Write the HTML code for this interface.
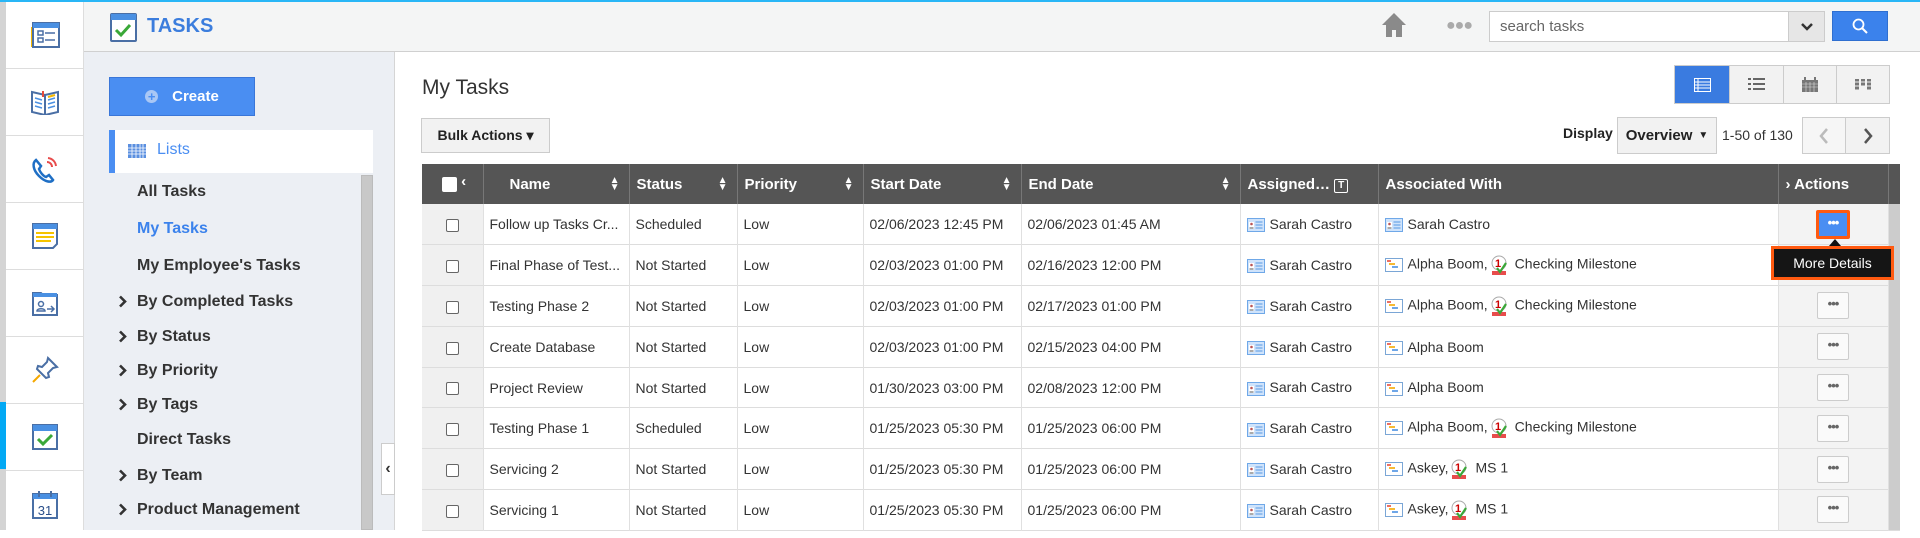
<!DOCTYPE html>
<html><head><meta charset="utf-8">
<style>
*{box-sizing:border-box;margin:0;padding:0}
body{width:1920px;height:530px;overflow:hidden;background:#fff;font-family:"Liberation Sans",Arial,sans-serif;position:relative;color:#333}
.abs{position:absolute}
#topline{left:0;top:0;width:1920px;height:2px;background:#29b6f6}
#iconbar{left:0;top:2px;width:84px;height:528px;background:#fff;border-right:1px solid #ddd}
#iconbar .g{position:absolute;left:0;top:0;width:6px;height:528px;background:#d4d4d4}
.ib{position:absolute;left:6px;width:78px;height:67px;border-bottom:1px solid #ddd;display:flex;align-items:center;justify-content:center}
#header{left:84px;top:2px;width:1836px;height:50px;background:#f4f5f5;border-bottom:1px solid #d0d0d0}
#sidebar{left:84px;top:52px;width:311px;height:478px;background:#eceff4;border-right:1px solid #d5d5d5}
.side-item{position:absolute;left:53px;font-size:16px;font-weight:bold;color:#333}
.chev{position:absolute;left:34px;width:9px;height:13px}
th,td{font-size:14px}
table{border-collapse:collapse;position:absolute;left:422px;top:164px;width:1478px;table-layout:fixed}
thead tr{height:40px;background:#555}
thead th{color:#fff;font-weight:bold;font-size:15px;text-align:left;padding-left:7px;border-right:1px solid #777;position:relative;white-space:nowrap}
tbody tr{height:40.8px;border-bottom:1px solid #ddd}
tbody td{padding-left:6px;white-space:nowrap;overflow:hidden;border-right:1px solid #e0e0e0;color:#333}
td.cb{background:#f0f0f0;text-align:center;padding:0}
td.act{background:#f3f3f3;text-align:center;padding:0}
.box{display:inline-block;width:13px;height:13px;border:1px solid #666;border-radius:2px;background:#fff;vertical-align:middle}
.sort{position:absolute;right:9px;top:13px;font-size:10px;line-height:7px;color:#fff}
.dots{display:inline-block;width:32px;height:27px;border:1px solid #ccc;background:#fafafa;border-radius:2px;color:#666;font-size:13px;line-height:22px;font-weight:bold;letter-spacing:-1px}
.btn{position:absolute;border:1px solid #ccc;background:#f2f2f2;font-weight:bold;font-size:14px;display:flex;align-items:center;justify-content:center;color:#222}
.ic{display:inline-block;vertical-align:middle;margin-right:5px}
</style></head><body>
<svg width="0" height="0" style="position:absolute"><defs>
<symbol id="card" viewBox="0 0 18 14"><rect x=".5" y=".5" width="17" height="13" fill="#cfe3fb" stroke="#6fa8e8"/><rect x="2" y="4" width="5" height="7" fill="#fff"/><circle cx="4.5" cy="6" r="1.3" fill="#b55"/><path d="M2.5 10h4" stroke="#555"/><path d="M8.5 4h7M8.5 7h7M8.5 10h7" stroke="#6fa8e8" stroke-width="1.3"/></symbol>
<symbol id="proj" viewBox="0 0 18 14"><rect x=".5" y=".5" width="17" height="13" fill="#fff" stroke="#7aa6d6"/><path d="M2 3h4" stroke="#e74c3c" stroke-width="1.6"/><path d="M4 6h6" stroke="#f5a800" stroke-width="1.6"/><path d="M7 9h6" stroke="#4a90e2" stroke-width="1.6"/></symbol>
<symbol id="ms" viewBox="0 0 16 20"><rect x="1" y="16" width="14" height="4" fill="#e84c4c"/><circle cx="8" cy="8" r="7" fill="#fff" stroke="#aaa"/><text x="7" y="12" font-size="11" font-weight="bold" fill="#c00" text-anchor="middle" font-family="Liberation Sans">1</text><path d="M6 13l3 4 6-9" fill="none" stroke="#3aa838" stroke-width="2.2"/></symbol>
<symbol id="chv" viewBox="0 0 9 13"><path d="M2 1.5l5 5-5 5" fill="none" stroke="#333" stroke-width="2.6"/></symbol>
</defs></svg>
<div class="abs" id="topline"></div>
<div class="abs" id="iconbar"><div class="g"></div>
<div class="ib" style="top:0"><svg width="30" height="28" viewBox="0 0 30 28"><rect x="1" y="6" width="4" height="20" fill="#f5b800"/><rect x="3" y="2" width="26" height="24" fill="#fff" stroke="#4a6fa5" stroke-width="2"/><rect x="3" y="2" width="26" height="5" fill="#4a90e2"/><rect x="8" y="10" width="5" height="4" fill="none" stroke="#4a6fa5" stroke-width="1.5"/><rect x="8" y="17" width="5" height="4" fill="none" stroke="#4a6fa5" stroke-width="1.5"/><path d="M15 12h10M15 19h10" stroke="#4a6fa5" stroke-width="1.5"/></svg></div>
<div class="ib" style="top:67px"><svg width="30" height="26" viewBox="0 0 30 26"><path d="M2 3l13 3 13-3v20l-13 3-13-3z" fill="#fff" stroke="#4a6fa5" stroke-width="2"/><path d="M15 6v20" stroke="#4a6fa5" stroke-width="2"/><path d="M5 9l7 2M5 13l7 2M5 17l7 2M18 11l7-2M18 15l7-2M18 19l7-2" stroke="#4a90e2" stroke-width="1.5"/><path d="M18 8l7-2" stroke="#f5b800" stroke-width="2"/><path d="M13 2v6" stroke="#e74c3c" stroke-width="2"/></svg></div>
<div class="ib" style="top:134px"><svg width="30" height="30" viewBox="0 0 30 30"><path d="M6 6c-4 3-3 10 3 16s12 7 14 4l-4-5-3 2c-3-1-6-5-7-8l2-3z" fill="#fff" stroke="#1f6fc5" stroke-width="2.5"/><path d="M18 4a9 9 0 0 1 8 8M17 8a5 5 0 0 1 5 5" fill="none" stroke="#e84c4c" stroke-width="2"/></svg></div>
<div class="ib" style="top:201px"><svg width="28" height="28" viewBox="0 0 28 28"><path d="M2 2h24v20l-4 4H2z" fill="#fff" stroke="#4a6fa5" stroke-width="2"/><rect x="2" y="2" width="24" height="5" fill="#4a90e2"/><path d="M5 11h18M5 15h18M5 19h15" stroke="#f5c400" stroke-width="2"/></svg></div>
<div class="ib" style="top:268px"><svg width="28" height="28" viewBox="0 0 28 28"><path d="M2 4h8l2 2h14v20H2z" fill="#fff" stroke="#4a6fa5" stroke-width="2"/><rect x="2" y="4" width="24" height="4" fill="#4a90e2"/><circle cx="10" cy="15" r="2.5" fill="none" stroke="#4a6fa5" stroke-width="1.5"/><path d="M6 22c0-3 8-3 8 0z" fill="none" stroke="#4a6fa5" stroke-width="1.5"/><path d="M16 20h7M20 17l3 3-3 3" fill="none" stroke="#4a6fa5" stroke-width="1.5"/></svg></div>
<div class="ib" style="top:335px"><svg width="28" height="28" viewBox="0 0 28 28"><path d="M17 2l9 9-4 1-5 5 1 4-3 1-9-9 1-3 4 1 5-5z" fill="#fff" stroke="#4a6fa5" stroke-width="2"/><path d="M9 19l-7 7" stroke="#f5a800" stroke-width="2"/></svg></div>
<div class="ib" style="top:402px"><svg width="28" height="28" viewBox="0 0 28 28"><rect x="2" y="2" width="24" height="24" fill="#fff" stroke="#4a6fa5" stroke-width="2"/><rect x="2" y="2" width="24" height="6" fill="#4a90e2"/><path d="M7 16l5 5 9-9" fill="none" stroke="#3aa838" stroke-width="3"/></svg></div>
<div class="abs" style="left:0;top:400px;width:6px;height:67px;background:#03a9f4"></div>
<div class="ib" style="top:469px;border:none"><svg width="28" height="30" viewBox="0 0 28 30"><rect x="2" y="4" width="24" height="24" fill="#fff" stroke="#4a6fa5" stroke-width="2"/><rect x="2" y="4" width="24" height="5" fill="#4a90e2"/><path d="M8 1v6M20 1v6" stroke="#4a6fa5" stroke-width="2"/><text x="14" y="25" font-size="13" text-anchor="middle" fill="#2a4f8a" font-family="Liberation Sans">31</text></svg></div>
</div>

<div class="abs" id="header">
<svg class="abs" style="left:26px;top:11px" width="27" height="29" viewBox="0 0 27 29"><rect x="1" y="1" width="25" height="27" rx="1" fill="#fff" stroke="#4a6fa5" stroke-width="2"/><rect x="1" y="1" width="25" height="6" fill="#4a90e2"/><path d="M6 17l5 5 9-10" fill="none" stroke="#3aa838" stroke-width="3"/></svg>
<div class="abs" style="left:63px;top:13px;font-size:20px;font-weight:bold;color:#3b7ddd">TASKS</div>
<svg class="abs" style="left:1298px;top:10px" width="24" height="26" viewBox="0 0 24 26"><path d="M12 1L0 13h4v12h6v-7h4v7h6V13h4z" fill="#8a8a8a"/></svg>
<div class="abs" style="left:1362px;top:15px;font-size:16px;color:#aaa;letter-spacing:-1px">●●●</div>
<div class="abs" style="left:1405px;top:9px;width:304px;height:31px;background:#fff;border:1px solid #ccc;font-size:15px;color:#666;padding:6px 10px">search tasks</div>
<div class="abs" style="left:1704px;top:9px;width:37px;height:31px;background:#e6e6e6;border:1px solid #ccc;display:flex;align-items:center;justify-content:center"><svg width="14" height="10"><path d="M2 2l5 5 5-5" fill="none" stroke="#333" stroke-width="2.5"/></svg></div>
<div class="abs" style="left:1748px;top:9px;width:56px;height:30px;background:#3b82ec;border:1px solid #2f6fd0;display:flex;align-items:center;justify-content:center"><svg width="16" height="16"><circle cx="6.5" cy="6.5" r="5" fill="none" stroke="#fff" stroke-width="1.8"/><path d="M10 10l5 5" stroke="#fff" stroke-width="2"/></svg></div>
</div>

<div class="abs" id="sidebar">
<div class="abs" style="left:25px;top:25px;width:146px;height:39px;background:#4a8ef2;border:1px solid #3a76d8;color:#fff;font-weight:bold;font-size:15px;display:flex;align-items:center;justify-content:center"><span style="display:inline-block;width:13px;height:13px;border-radius:50%;background:#a9c7f5;color:#4a8ef2;font-size:13px;line-height:13px;text-align:center;margin-right:14px">+</span>Create</div>
<div class="abs" style="left:25px;top:78px;width:264px;height:43px;background:#fff;border-left:6px solid #4a8ef2"></div>
<svg class="abs" style="left:44px;top:92px" width="18" height="14"><rect width="18" height="14" fill="#5a8fe0"/><path d="M0 4h18M0 7h18M0 10h18M4 0v14M8 0v14M12 0v14M15 0v14" stroke="#fff" stroke-width=".8"/></svg>
<div class="abs" style="left:73px;top:89px;font-size:16px;color:#4a8ef2">Lists</div>
<div class="abs" style="left:277px;top:123px;width:12px;height:355px;background:#c8c8c8;border:1px solid #bbb"></div>
<div class="side-item" style="top:131px">All Tasks</div>
<div class="side-item" style="top:168px;color:#3b82ec">My Tasks</div>
<div class="side-item" style="top:205px">My Employee's Tasks</div>
<svg class="chev" style="top:243px"><use href="#chv"/></svg><div class="side-item" style="top:241px">By Completed Tasks</div>
<svg class="chev" style="top:278px"><use href="#chv"/></svg><div class="side-item" style="top:276px">By Status</div>
<svg class="chev" style="top:312px"><use href="#chv"/></svg><div class="side-item" style="top:310px">By Priority</div>
<svg class="chev" style="top:346px"><use href="#chv"/></svg><div class="side-item" style="top:344px">By Tags</div>
<div class="side-item" style="top:379px">Direct Tasks</div>
<svg class="chev" style="top:417px"><use href="#chv"/></svg><div class="side-item" style="top:415px">By Team</div>
<svg class="chev" style="top:451px"><use href="#chv"/></svg><div class="side-item" style="top:449px">Product Management</div>
<div class="abs" style="left:297px;top:391px;width:14px;height:52px;background:#fff;border:1px solid #ccc;font-weight:bold;font-size:16px;display:flex;align-items:center;justify-content:center">‹</div>
</div>

<div class="abs" style="left:422px;top:76px;font-size:21px;color:#333">My Tasks</div>
<div class="btn" style="left:421px;top:118px;width:129px;height:35px;font-size:14px">Bulk Actions ▾</div>

<div class="abs" style="left:1674px;top:65px;width:216px;height:39px;border:1px solid #ccc;background:#f2f2f2;display:flex">
<div style="width:55px;background:#3a7be0;border-right:1px solid #ccc;display:flex;align-items:center;justify-content:center"><svg width="17" height="14"><rect x=".5" y=".5" width="16" height="13" fill="none" stroke="#fff"/><path d="M0 4h17M0 7h17M0 10h17M4 0v14" stroke="#fff"/></svg></div>
<div style="width:54px;border-right:1px solid #ccc;display:flex;align-items:center;justify-content:center"><svg width="17" height="13"><path d="M0 1h3M5 1h12M0 6h3M5 6h12M0 11h3M5 11h12" stroke="#666" stroke-width="2"/></svg></div>
<div style="width:53px;border-right:1px solid #ccc;display:flex;align-items:center;justify-content:center"><svg width="16" height="15"><rect y="3" width="16" height="12" fill="#777"/><path d="M3 0v4M13 0v4" stroke="#777" stroke-width="2"/><path d="M0 7h16M0 10h16M4 5v10M8 5v10M12 5v10" stroke="#ddd" stroke-width=".6"/></svg></div>
<div style="flex:1;display:flex;align-items:center;justify-content:center"><svg width="16" height="12"><path d="M0 1h4M6 1h4M12 1h4M0 5h4M6 5h4M12 5h4M0 9h4M12 9h4" stroke="#777" stroke-width="3"/></svg></div>
</div>

<div class="abs" style="left:1563px;top:125px;font-size:14px;font-weight:bold;color:#222">Display</div>
<div class="btn" style="left:1617px;top:117px;width:100px;height:37px;font-size:15px">Overview <span style="font-size:10px;margin-left:6px">▼</span></div>
<div class="abs" style="left:1722px;top:127px;font-size:14px;color:#333">1-50 of 130</div>
<div class="abs" style="left:1802px;top:117px;width:88px;height:37px;border:1px solid #ccc;display:flex">
<div style="width:43px;background:#f6f6f6;border-right:1px solid #ccc;display:flex;align-items:center;justify-content:center"><svg width="10" height="16"><path d="M8 1L2 8l6 7" fill="none" stroke="#bbb" stroke-width="2.5"/></svg></div>
<div style="flex:1;background:#f2f2f2;display:flex;align-items:center;justify-content:center"><svg width="10" height="16"><path d="M2 1l6 7-6 7" fill="none" stroke="#555" stroke-width="2.5"/></svg></div>
</div>

<table>
<colgroup><col style="width:61px"><col style="width:146px"><col style="width:108px"><col style="width:126px"><col style="width:158px"><col style="width:219px"><col style="width:138px"><col style="width:400px"><col style="width:110px"><col style="width:12px"></colgroup>
<thead><tr>
<th style="padding-left:20px"><span class="box" style="border:none;width:15px;height:15px"></span> <span style="position:relative;top:-3px">‹</span></th>
<th style="padding-left:26px">Name<span class="sort">▲<br>▼</span></th>
<th>Status<span class="sort">▲<br>▼</span></th>
<th>Priority<span class="sort">▲<br>▼</span></th>
<th>Start Date<span class="sort">▲<br>▼</span></th>
<th>End Date<span class="sort">▲<br>▼</span></th>
<th>Assigned… <span style="display:inline-block;width:14px;height:14px;border:1.5px solid #fff;border-radius:2px;font-size:10px;line-height:11px;text-align:center;vertical-align:1px">T</span></th>
<th>Associated With</th>
<th>› Actions</th>
<th style="border:none"></th>
</tr></thead>
<tbody>
<tr><td class="cb"><span class="box"></span></td><td>Follow up Tasks Cr...</td><td>Scheduled</td><td>Low</td><td>02/06/2023 12:45 PM</td><td>02/06/2023 01:45 AM</td><td><svg class="ic" width="18" height="14"><use href="#card"/></svg>Sarah Castro</td><td><svg class="ic" width="18" height="14"><use href="#card"/></svg>Sarah Castro</td><td class="act"><span class="dots" style="background:#4a8ef2;border:3px solid #ff5a10;color:#fff;width:34px;height:29px;line-height:20px">•••</span></td><td rowspan="8" style="background:#ccc;padding:0;border:none"></td></tr>
<tr><td class="cb"><span class="box"></span></td><td>Final Phase of Test...</td><td>Not Started</td><td>Low</td><td>02/03/2023 01:00 PM</td><td>02/16/2023 12:00 PM</td><td><svg class="ic" width="18" height="14"><use href="#card"/></svg>Sarah Castro</td><td><svg class="ic" width="18" height="14"><use href="#proj"/></svg>Alpha Boom,<svg class="ic" style="margin:0 8px 0 3px" width="16" height="20"><use href="#ms"/></svg>Checking Milestone</td><td class="act"></td></tr>
<tr><td class="cb"><span class="box"></span></td><td>Testing Phase 2</td><td>Not Started</td><td>Low</td><td>02/03/2023 01:00 PM</td><td>02/17/2023 01:00 PM</td><td><svg class="ic" width="18" height="14"><use href="#card"/></svg>Sarah Castro</td><td><svg class="ic" width="18" height="14"><use href="#proj"/></svg>Alpha Boom,<svg class="ic" style="margin:0 8px 0 3px" width="16" height="20"><use href="#ms"/></svg>Checking Milestone</td><td class="act"><span class="dots">•••</span></td></tr>
<tr><td class="cb"><span class="box"></span></td><td>Create Database</td><td>Not Started</td><td>Low</td><td>02/03/2023 01:00 PM</td><td>02/15/2023 04:00 PM</td><td><svg class="ic" width="18" height="14"><use href="#card"/></svg>Sarah Castro</td><td><svg class="ic" width="18" height="14"><use href="#proj"/></svg>Alpha Boom</td><td class="act"><span class="dots">•••</span></td></tr>
<tr><td class="cb"><span class="box"></span></td><td>Project Review</td><td>Not Started</td><td>Low</td><td>01/30/2023 03:00 PM</td><td>02/08/2023 12:00 PM</td><td><svg class="ic" width="18" height="14"><use href="#card"/></svg>Sarah Castro</td><td><svg class="ic" width="18" height="14"><use href="#proj"/></svg>Alpha Boom</td><td class="act"><span class="dots">•••</span></td></tr>
<tr><td class="cb"><span class="box"></span></td><td>Testing Phase 1</td><td>Scheduled</td><td>Low</td><td>01/25/2023 05:30 PM</td><td>01/25/2023 06:00 PM</td><td><svg class="ic" width="18" height="14"><use href="#card"/></svg>Sarah Castro</td><td><svg class="ic" width="18" height="14"><use href="#proj"/></svg>Alpha Boom,<svg class="ic" style="margin:0 8px 0 3px" width="16" height="20"><use href="#ms"/></svg>Checking Milestone</td><td class="act"><span class="dots">•••</span></td></tr>
<tr><td class="cb"><span class="box"></span></td><td>Servicing 2</td><td>Not Started</td><td>Low</td><td>01/25/2023 05:30 PM</td><td>01/25/2023 06:00 PM</td><td><svg class="ic" width="18" height="14"><use href="#card"/></svg>Sarah Castro</td><td><svg class="ic" width="18" height="14"><use href="#proj"/></svg>Askey,<svg class="ic" style="margin:0 8px 0 3px" width="16" height="20"><use href="#ms"/></svg>MS 1</td><td class="act"><span class="dots">•••</span></td></tr>
<tr><td class="cb"><span class="box"></span></td><td>Servicing 1</td><td>Not Started</td><td>Low</td><td>01/25/2023 05:30 PM</td><td>01/25/2023 06:00 PM</td><td><svg class="ic" width="18" height="14"><use href="#card"/></svg>Sarah Castro</td><td><svg class="ic" width="18" height="14"><use href="#proj"/></svg>Askey,<svg class="ic" style="margin:0 8px 0 3px" width="16" height="20"><use href="#ms"/></svg>MS 1</td><td class="act"><span class="dots">•••</span></td></tr>
</tbody></table>

<div class="abs" style="left:1829px;top:239px;width:0;height:0;border-left:6px solid transparent;border-right:6px solid transparent;border-bottom:7px solid #111"></div>
<div class="abs" style="left:1771px;top:246px;width:123px;height:34px;background:#151515;border:3px solid #ff5a10;color:#fff;font-size:14px;display:flex;align-items:center;justify-content:center">More Details</div>
</body></html>
